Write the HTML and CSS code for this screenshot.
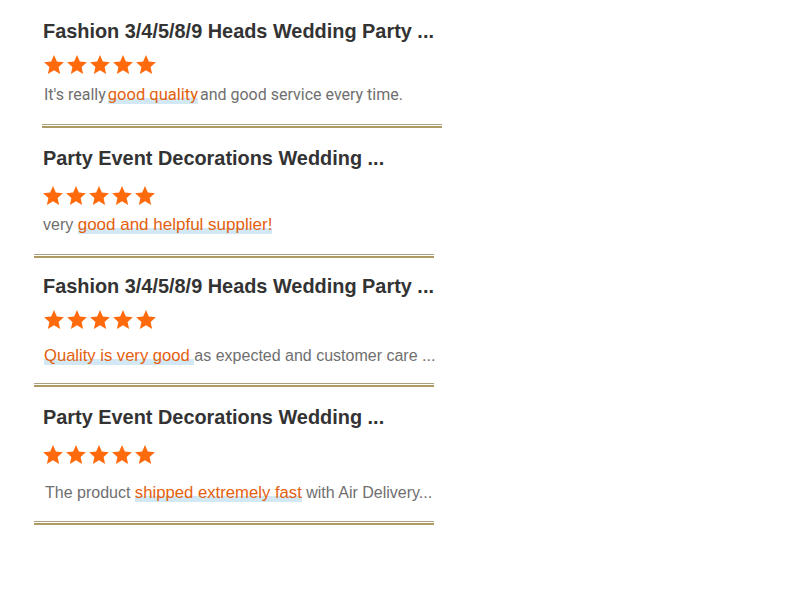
FILE: index.html
```html
<!DOCTYPE html>
<html>
<head>
<meta charset="utf-8">
<link rel="stylesheet" href="styles.css">
</head>
<body>
<svg width="0" height="0" class="defs">
  <defs>
    <symbol id="star" viewBox="0 0 24 24">
      <path d="M12 1.2l3.1 7.1 7.7.7-5.8 5.1 1.7 7.6L12 17.7l-6.7 4 1.7-7.6L1.2 9l7.7-.7z" fill="#ff6a0c"/>
    </symbol>
  </defs>
</svg>
<div class="list">
  <div class="card card-first">
    <h2 class="title t1">Fashion 3/4/5/8/9 Heads Wedding Party ...</h2>
    <div class="stars s1">
      <svg><use href="#star"/></svg><svg><use href="#star"/></svg><svg><use href="#star"/></svg><svg><use href="#star"/></svg><svg><use href="#star"/></svg>
    </div>
    <p class="review r1"><span class="grey">It's really</span><span class="hl">good quality</span><span class="grey">and good service every time.</span></p>
    <div class="sep p1"></div>
  </div>
  <div class="card">
    <h2 class="title t2">Party Event Decorations Wedding ...</h2>
    <div class="stars s2">
      <svg><use href="#star"/></svg><svg><use href="#star"/></svg><svg><use href="#star"/></svg><svg><use href="#star"/></svg><svg><use href="#star"/></svg>
    </div>
    <p class="review r2"><span class="grey">very </span><span class="hl">good and helpful supplier!</span></p>
    <div class="sep p2"></div>
  </div>
  <div class="card">
    <h2 class="title t3">Fashion 3/4/5/8/9 Heads Wedding Party ...</h2>
    <div class="stars s3">
      <svg><use href="#star"/></svg><svg><use href="#star"/></svg><svg><use href="#star"/></svg><svg><use href="#star"/></svg><svg><use href="#star"/></svg>
    </div>
    <p class="review r3"><span class="hl">Quality is very good </span><span class="grey">as expected and customer care ...</span></p>
    <div class="sep p3"></div>
  </div>
  <div class="card">
    <h2 class="title t4">Party Event Decorations Wedding ...</h2>
    <div class="stars s4">
      <svg><use href="#star"/></svg><svg><use href="#star"/></svg><svg><use href="#star"/></svg><svg><use href="#star"/></svg><svg><use href="#star"/></svg>
    </div>
    <p class="review r4"><span class="grey">The product </span><span class="hl">shipped extremely fast</span><span class="grey"> with Air Delivery...</span></p>
    <div class="sep p4"></div>
  </div>
</div>
</body>
</html>
```
FILE: styles.css
```css
html, body {
  margin: 0;
  padding: 0;
  background: #ffffff;
}
.defs {
  position: absolute;
  width: 0;
  height: 0;
}
.list {
  display: flex;
  flex-direction: column;
}
.card {
  width: 400px;
  margin-left: 34px;
  padding-left: 9px;
  box-sizing: border-box;
  display: flex;
  flex-direction: column;
}
.card-first {
  margin-left: 42px;
  padding-left: 1px;
}
.title {
  margin: 0;
  font-family: "Liberation Sans", Arial, sans-serif;
  font-weight: bold;
  font-size: 19.9px;
  line-height: 24px;
  height: 24px;
  color: #333333;
  white-space: nowrap;
}
.t1 { margin-top: 19px; }
.t2 { margin-top: 18px; }
.t3 { margin-top: 16px; }
.t4 { margin-top: 18px; }
.stars {
  display: flex;
  gap: 1px;
  height: 22px;
}
.stars svg {
  width: 22px;
  height: 22px;
}
.s1 { margin-top: 11px; }
.s2 { margin-top: 15px; margin-left: -1px; }
.s3 { margin-top: 11px; }
.s4 { margin-top: 15px; margin-left: -1px; }
.review {
  margin: 0;
  height: 20px;
  white-space: nowrap;
  font-family: "Liberation Sans", Arial, sans-serif;
  font-size: 16px;
  line-height: 20px;
}
.grey { color: #6f6f6f; }
.hl {
  color: #e4600e;
  font-size: 17px;
  background: linear-gradient(to bottom, transparent 68%, #d2e8f4 68%, #d2e8f4 100%);
}
.r1 {
  font-family: Roboto, "Liberation Sans", sans-serif;
  margin-top: 9px;
  margin-left: 1px;
}
.r1 .hl {
  font-size: 16.5px;
  margin: 0 2px;
}
.r2 { margin-top: 8px; }
.r3 { margin-top: 15px; margin-left: 1px; }
.r3 .hl { font-size: 16.6px; }
.r4 { margin-top: 17px; margin-left: 2px; }
.r4 .hl { font-size: 16.7px; }
.sep {
  height: 1px;
  border-top: 1px solid #aaa182;
  border-bottom: 2px solid #ae9a62;
  margin-left: -9px;
  flex-shrink: 0;
}
.card-first .sep { margin-left: -1px; }
.p1 { margin-top: 19px; }
.p2 { margin-top: 19px; }
.p3 { margin-top: 17px; }
.p4 { margin-top: 18px; }
```
